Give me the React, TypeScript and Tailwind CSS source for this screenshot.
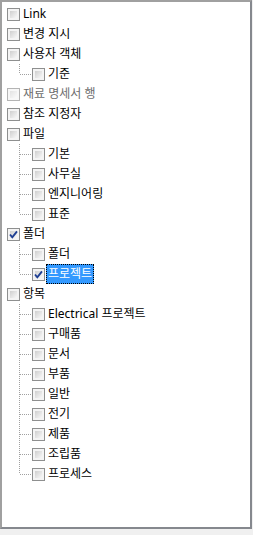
import React from "react";

type Node = {
  label: string;
  checked?: boolean;
  selected?: boolean;
  disabled?: boolean;
  children?: Node[];
};

const tree: Node[] = [
  { label: "Link" },
  { label: "변경 지시" },
  { label: "사용자 객체", children: [{ label: "기준" }] },
  { label: "재료 명세서 행", disabled: true },
  { label: "참조 지정자" },
  {
    label: "파일",
    children: [
      { label: "기본" },
      { label: "사무실" },
      { label: "엔지니어링" },
      { label: "표준" },
    ],
  },
  {
    label: "폴더",
    checked: true,
    children: [
      { label: "폴더" },
      { label: "프로젝트", checked: true, selected: true },
    ],
  },
  {
    label: "항목",
    children: [
      { label: "Electrical 프로젝트" },
      { label: "구매품" },
      { label: "문서" },
      { label: "부품" },
      { label: "일반" },
      { label: "전기" },
      { label: "제품" },
      { label: "조립품" },
      { label: "프로세스" },
    ],
  },
];

const CheckBox: React.FC<{ checked?: boolean; disabled?: boolean }> = ({
  checked,
  disabled,
}) => (
  <span
    className={`relative flex h-[13px] w-[13px] shrink-0 border p-[2px] ${
      disabled ? "border-[#b4b4b4] bg-[#f7f7f7]" : "border-[#8e8f8f] bg-[#f4f4f4]"
    }`}
  >
    <span
      className={`block h-full w-full bg-gradient-to-br ${
        disabled ? "from-[#e2e2e2] to-[#fafafa]" : "from-[#cfcfcf] to-[#f8f8f8]"
      }`}
    />
    {checked && (
      <svg
        className="absolute left-0 top-0"
        width="11"
        height="11"
        viewBox="0 0 11 11"
      >
        <path
          d="M2 5.5 L4.3 8.3 L9 2.3"
          fill="none"
          stroke="#1f3f93"
          strokeWidth="1.9"
        />
      </svg>
    )}
  </span>
);

const Connector: React.FC<{ last: boolean }> = ({ last }) => (
  <svg width="13" height="20" viewBox="0 0 13 20" className="shrink-0">
    <line
      x1="0.5"
      y1="0"
      x2="0.5"
      y2={last ? 10 : 20}
      stroke="#a0a0a0"
      strokeDasharray="1 1"
    />
    <line
      x1="1"
      y1="10.5"
      x2="13"
      y2="10.5"
      stroke="#a0a0a0"
      strokeDasharray="1 1"
    />
  </svg>
);

const Label: React.FC<{ node: Node }> = ({ node }) => (
  <span
    className={`ml-px flex h-[20px] items-center whitespace-nowrap px-[2px] text-[12px] leading-none ${
      node.selected
        ? "bg-[#3399ff] text-white outline outline-1 -outline-offset-1 outline-dotted outline-[#000]"
        : node.disabled
          ? "text-[#6d6d6d]"
          : "text-black"
    }`}
  >
    {node.label}
  </span>
);

const Row: React.FC<{ node: Node; child?: boolean; last?: boolean }> = ({
  node,
  child,
  last,
}) => (
  <div className="flex h-5 items-center">
    {child ? (
      <>
        <span className="w-[12px] shrink-0" />
        <Connector last={!!last} />
      </>
    ) : null}
    <CheckBox checked={node.checked} disabled={node.disabled} />
    <Label node={node} />
  </div>
);

export default function App() {
  return (
    <div
      className="h-[535px] w-[253px] bg-[#f0f0f0]"
      style={{ fontFamily: '"Noto Sans", "Noto Sans CJK KR", sans-serif' }}
    >
      <div className="h-[529px] w-[252px] border-2 border-t-[#a0a0a0] border-l-[#a0a0a0] border-r-[#85888e] border-b-[#85888e] bg-white pl-[5px] pt-[2px]">
        {tree.map((node) => (
          <div key={node.label}>
            <Row node={node} />
            {node.children?.map((c, i) => (
              <Row
                key={c.label}
                node={c}
                child
                last={i === node.children!.length - 1}
              />
            ))}
          </div>
        ))}
      </div>
    </div>
  );
}
